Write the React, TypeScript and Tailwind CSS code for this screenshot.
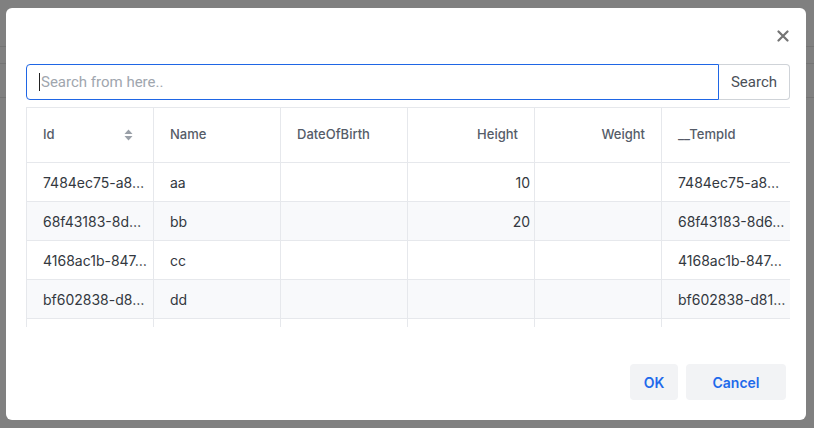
import React from "react";

const rows = [
  { id: "7484ec75-a8…", name: "aa", h: "10", tmp: "7484ec75-a8…" },
  { id: "68f43183-8d…", name: "bb", h: "20", tmp: "68f43183-8d6…" },
  { id: "4168ac1b-847…", name: "cc", h: "", tmp: "4168ac1b-847…" },
  { id: "bf602838-d8…", name: "dd", h: "", tmp: "bf602838-d81…" },
  { id: "", name: "", h: "", tmp: "" },
];

function SortIcon() {
  return (
    <svg width="9" height="12" viewBox="0 0 9 12" className="shrink-0">
      <path d="M4.5 0.5 L8.5 5 L0.5 5 Z" fill="#9aa0a8" />
      <path d="M0.5 7 L8.5 7 L4.5 11.5 Z" fill="#9aa0a8" />
    </svg>
  );
}

export default function App() {
  const cols = "grid grid-cols-[127px_127px_127px_127px_127px_140px]";
  return (
    <div className="relative h-[428px] w-[814px] overflow-hidden bg-[#808080]" style={{ fontFamily: "Inter, 'Noto Sans', sans-serif" }}>
      <div className="h-[47px] border-b border-[#747474]" />
      <div className="h-[17px] border-b border-[#747474]" />
      <div className="h-[34px] border-b border-[#747474]" />

      <div className="absolute left-[6px] top-[8px] flex h-[412px] w-[800px] flex-col rounded-md bg-white">
        <div className="flex h-[56px] items-start justify-end pr-[17px] pt-[22px]">
          <svg width="12" height="12" viewBox="0 0 12 12">
            <path d="M1.5 1.5 L10.5 10.5 M10.5 1.5 L1.5 10.5" stroke="#747474" strokeWidth="2.2" strokeLinecap="round" />
          </svg>
        </div>
        <div className="pl-5 pr-4">
          <div className="flex h-[36px]">
            <div className="flex flex-1 items-center rounded-l border border-[#1f66e5] pl-3 text-[15px] text-[#a0a6ae]" style={{ fontFamily: "Roboto, sans-serif" }}>
              <span className="mr-px h-[18px] w-px bg-[#222]" />
              Search from here..
            </div>
            <div className="flex w-[71px] items-center justify-center rounded-r border border-l-0 border-[#cfd3d8] text-[15px] text-[#4a4f57]" style={{ fontFamily: "Roboto, sans-serif" }}>
              Search
            </div>
          </div>
          <div className="mt-[7px] h-[220px] overflow-hidden border-l border-t border-[#e6e8ec]">
            <div className={`${cols} h-[55px] border-b border-[#e6e8ec] text-[13px] font-medium text-[#555c68]`}>
              <div className="flex items-center justify-between border-r border-[#e6e8ec] pl-4 pr-5">
                <span>Id</span>
                <SortIcon />
              </div>
              <div className="flex items-center border-r border-[#e6e8ec] pl-4">Name</div>
              <div className="flex items-center border-r border-[#e6e8ec] pl-4">DateOfBirth</div>
              <div className="flex items-center justify-end border-r border-[#e6e8ec] pr-4">Height</div>
              <div className="flex items-center justify-end border-r border-[#e6e8ec] pr-4">Weight</div>
              <div className="flex items-center pl-4">__TempId</div>
            </div>
            {rows.map((r, i) => (
              <div key={i} className={`${cols} h-[39px] border-b border-[#e6e8ec] text-[14px] text-[#333840] ${i % 2 === 1 ? "bg-[#f8f9fb]" : "bg-white"}`}>
                <div className="flex items-center whitespace-nowrap border-r border-[#e6e8ec] pl-4">{r.id}</div>
                <div className="flex items-center border-r border-[#e6e8ec] pl-4">{r.name}</div>
                <div className="flex items-center border-r border-[#e6e8ec] pl-4" />
                <div className="flex items-center justify-end border-r border-[#e6e8ec] pr-1">{r.h}</div>
                <div className="flex items-center border-r border-[#e6e8ec]" />
                <div className="flex items-center whitespace-nowrap pl-4">{r.tmp}</div>
              </div>
            ))}
          </div>
        </div>
        <div className="mt-auto flex justify-end gap-2 px-5 pb-5">
          <button className="h-[36px] w-[48px] rounded bg-[#f2f3f5] text-[14px] font-semibold text-[#1f6aeb]">OK</button>
          <button className="h-[36px] w-[100px] rounded bg-[#f2f3f5] text-[14px] font-semibold text-[#1f6aeb]">Cancel</button>
        </div>
      </div>
    </div>
  );
}
